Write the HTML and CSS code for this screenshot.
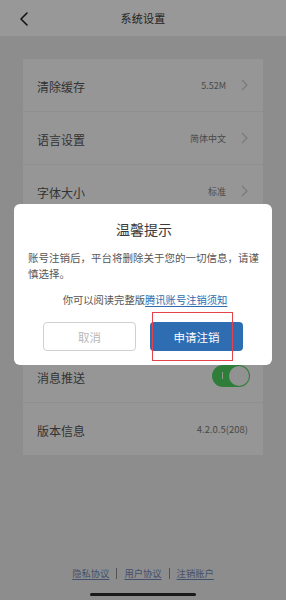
FILE: index.html
```html
<!DOCTYPE html>
<html lang="zh-CN">
<head>
<meta charset="utf-8">
<title>系统设置</title>
<link rel="stylesheet" href="styles.css">
</head>
<body>
<div class="page">
  <header class="header">
    <svg class="back" width="10" height="14" viewBox="0 0 10 14"><path d="M8 1 L2 7 L8 13" fill="none" stroke="#222" stroke-width="1.6" stroke-linecap="round" stroke-linejoin="round"/></svg>
    <div class="title">系统设置</div>
  </header>

  <div class="card">
    <div class="row">
      <span class="label">清除缓存</span>
      <span class="value">5.52M</span>
      <svg class="chev" width="7" height="12" viewBox="0 0 7 12"><path d="M1 1 L6 6 L1 11" fill="none" stroke="#c8c8c8" stroke-width="1.1"/></svg>
    </div>
    <div class="row">
      <span class="label">语言设置</span>
      <span class="value">简体中文</span>
      <svg class="chev" width="7" height="12" viewBox="0 0 7 12"><path d="M1 1 L6 6 L1 11" fill="none" stroke="#c8c8c8" stroke-width="1.1"/></svg>
    </div>
    <div class="row">
      <span class="label">字体大小</span>
      <span class="value">标准</span>
      <svg class="chev" width="7" height="12" viewBox="0 0 7 12"><path d="M1 1 L6 6 L1 11" fill="none" stroke="#c8c8c8" stroke-width="1.1"/></svg>
    </div>
    <div class="row row-hidden"></div>
    <div class="row row-hidden row-tall"></div>
    <div class="row">
      <span class="label">消息推送</span>
      <span class="switch"><span class="switch-mark"></span><span class="knob"></span></span>
    </div>
    <div class="row row-last">
      <span class="label">版本信息</span>
      <span class="value value-end">4.2.0.5(208)</span>
    </div>
  </div>

  <div class="spacer"></div>

  <div class="footer">
    <a class="flink">隐私协议</a><span class="sep"></span><a class="flink">用户协议</a><span class="sep"></span><a class="flink">注销账户</a>
  </div>
  <div class="homebar"></div>
</div>

<div class="overlay">
  <div class="dialog">
    <div class="d-title">温馨提示</div>
    <div class="d-body">账号注销后，平台将删除关于您的一切信息，请谨慎选择。</div>
    <div class="d-link">你可以阅读完整版<a class="d-a">腾讯账号注销须知</a></div>
    <div class="d-btns">
      <div class="btn btn-cancel">取消</div>
      <div class="btn btn-ok">申请注销<span class="mark"></span></div>
    </div>
  </div>
</div>
</body>
</html>
```

FILE: styles.css
```css
* { box-sizing: border-box; }
html, body { margin: 0; padding: 0; }
body {
  width: 286px;
  height: 600px;
  overflow: hidden;
  font-family: "Noto Sans CJK SC", "Noto Sans", sans-serif;
  background: #ececec;
}
.page {
  height: 600px;
  display: flex;
  flex-direction: column;
}
.header {
  height: 36px;
  background: #fefefe;
  display: flex;
  align-items: center;
  justify-content: center;
  position: relative;
  flex: none;
}
.back {
  position: absolute;
  left: 19px;
  top: 12px;
}
.title {
  font-size: 11px;
  color: #3a3a3a;
  letter-spacing: 0.3px;
}
.card {
  margin: 23px 23px 0;
  background: #fbfbfb;
  flex: none;
}
.row {
  height: 53px;
  display: flex;
  align-items: center;
  padding: 0 15px 0 14px;
  border-bottom: 1px solid #efefef;
}
.row-tall { height: 79px; }
.row-last { border-bottom: none; height: 52px; }
.label {
  font-size: 12px;
  color: #555;
  flex: 1;
  padding-top: 2px;
}
.value {
  font-size: 9px;
  color: #7a7a7a;
  margin-right: 15px;
}
.value-end { margin-right: 0; font-size: 9.5px; }
.chev { flex: none; }
.switch {
  width: 38px;
  height: 22px;
  border-radius: 11px;
  background: #4ed262;
  position: relative;
  margin-left: auto;
  margin-right: -2px;
  display: block;
}
.switch-mark {
  position: absolute;
  left: 10px;
  top: 7px;
  width: 1px;
  height: 7px;
  background: #e8ffe8;
}
.knob {
  position: absolute;
  right: 1px;
  top: 1px;
  width: 20px;
  height: 20px;
  border-radius: 50%;
  background: #f4f4f4;
}
.spacer { flex: 1; }
.footer {
  display: flex;
  justify-content: center;
  align-items: center;
  height: 16px;
  flex: none;
}
.flink {
  font-size: 9.3px;
  color: #7088b4;
  text-decoration: underline;
  text-underline-offset: 2px;
}
.sep {
  width: 1px;
  height: 11px;
  background: #8a8a8a;
  margin: 0 7px;
}
.homebar {
  width: 106px;
  height: 3px;
  border-radius: 2px;
  background: #2a2a2a;
  margin: 12px auto 4px;
  flex: none;
}
.overlay {
  position: fixed;
  inset: 0;
  background: rgba(0, 0, 0, 0.4);
  display: flex;
  justify-content: center;
  align-items: flex-start;
  padding-top: 204px;
}
.dialog {
  width: 258px;
  background: #ffffff;
  border-radius: 6px;
  padding: 14px 12px 14px 14px;
}
.d-title {
  text-align: center;
  font-size: 14px;
  line-height: 22px;
  color: #3a3a3a;
}
.d-body {
  margin-top: 10px;
  font-size: 10.5px;
  line-height: 16px;
  color: #555;
}
.d-link {
  margin-top: 10px;
  text-align: center;
  font-size: 10.3px;
  line-height: 16px;
  color: #555;
  padding-left: 2px;
}
.d-a {
  color: #2f6cae;
  text-decoration: underline;
  text-underline-offset: 2px;
}
.d-btns {
  margin-top: 14px;
  display: flex;
  justify-content: center;
  gap: 14px;
  padding-right: 2px;
}
.btn {
  width: 93px;
  height: 29px;
  border-radius: 4px;
  display: flex;
  align-items: center;
  justify-content: center;
  font-size: 11.5px;
}
.btn-cancel {
  border: 1px solid #d0d0d0;
  color: #b8b8b8;
}
.btn-ok {
  background: #2f6db3;
  color: #ffffff;
  position: relative;
}
.mark {
  position: absolute;
  left: 2px;
  top: -10px;
  width: 81px;
  height: 49px;
  border: 1.5px solid #e8414e;
}
```
